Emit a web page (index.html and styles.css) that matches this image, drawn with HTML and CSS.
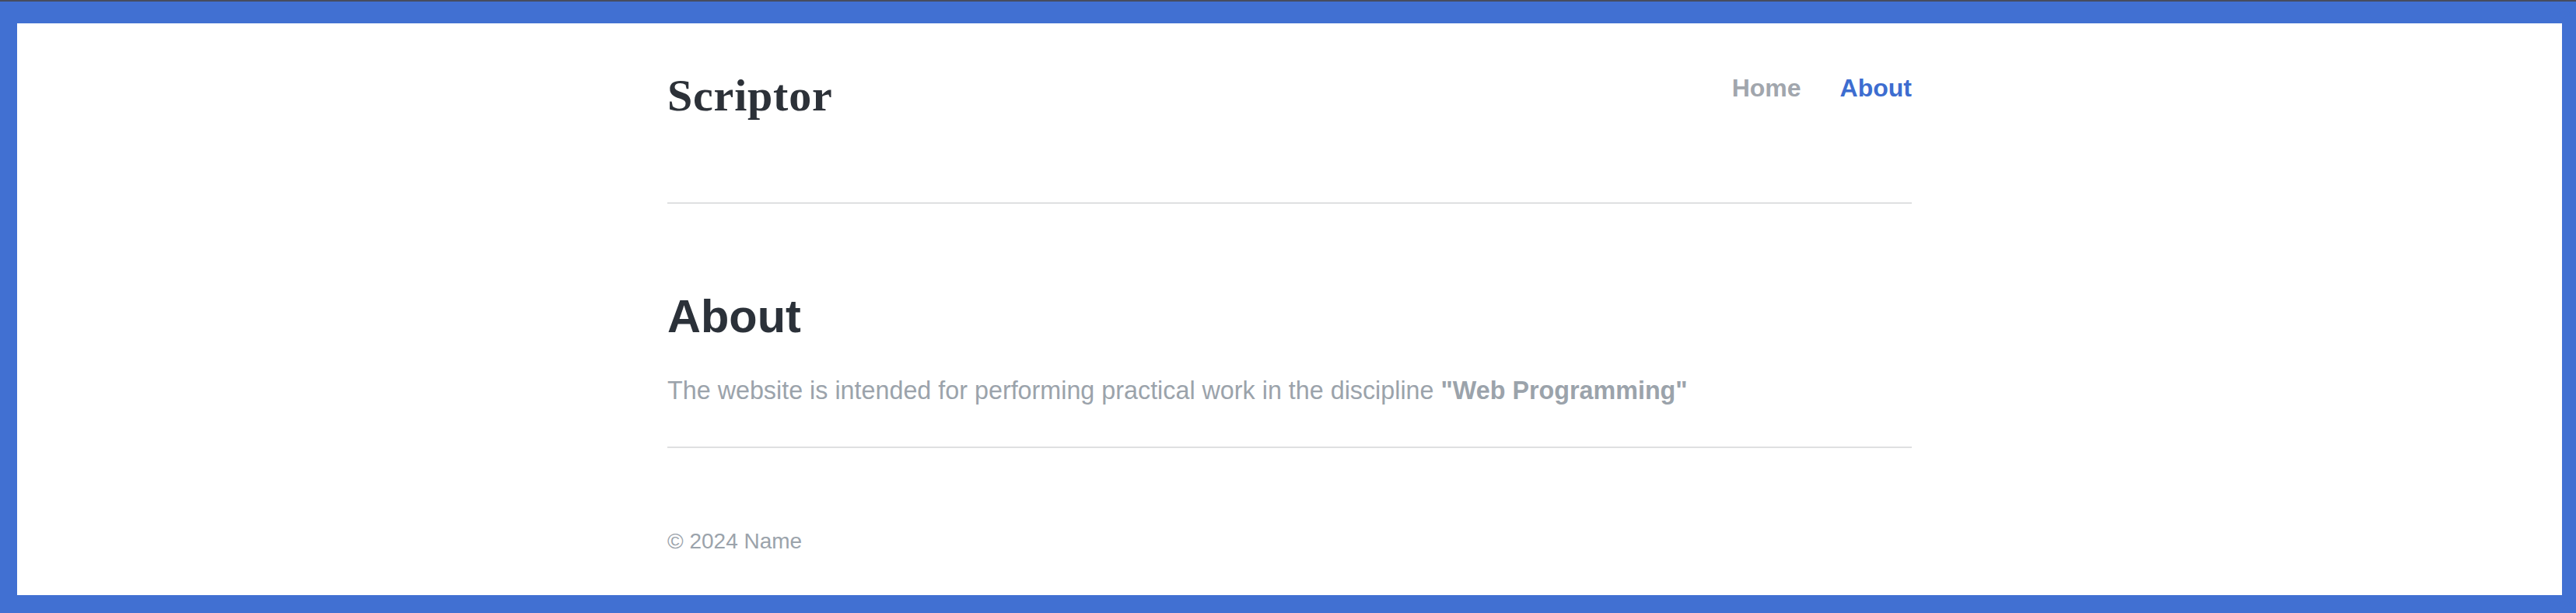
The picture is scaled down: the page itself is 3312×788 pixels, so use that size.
FILE: index.html
```html
<!DOCTYPE html>
<html lang="en">
<head>
<meta charset="utf-8">
<title>Scriptor — About</title>
<link rel="stylesheet" href="styles.css">
</head>
<body>
<div class="topstrip"></div>
<div class="frame">
  <div class="page">
    <header class="site-header">
      <a class="logo" href="#">Scriptor</a>
      <nav class="nav">
        <a class="nav-link" href="#">Home</a>
        <a class="nav-link nav-link-active" href="#">About</a>
      </nav>
    </header>
    <main class="content">
      <h1 class="title">About</h1>
      <p class="lead">The website is intended for performing practical work in the discipline <strong>"Web Programming"</strong></p>
    </main>
    <footer class="site-footer">© 2024 Name</footer>
  </div>
</div>
</body>
</html>
```

FILE: styles.css
```css
html, body {
  margin: 0;
  padding: 0;
}
body {
  background: #4170d2;
  font-family: "Liberation Sans", Arial, sans-serif;
  height: 788px;
  overflow: hidden;
}
.topstrip {
  height: 2px;
  background: #474c5e;
}
.frame {
  margin: 28px 18px 0 22px;
  height: 735px;
  background: #ffffff;
  display: flex;
  justify-content: center;
}
.page {
  width: 1600px;
}
.site-header {
  display: flex;
  justify-content: space-between;
  align-items: flex-start;
  padding-top: 64px;
  padding-bottom: 108px;
  border-bottom: 2px solid #dfe0e1;
}
.logo {
  font-family: "Liberation Serif", Georgia, serif;
  font-weight: 700;
  font-size: 58px;
  line-height: 58px;
  letter-spacing: 0.8px;
  color: #2c3138;
  text-decoration: none;
}
.nav {
  display: flex;
  gap: 50px;
  margin-top: 3px;
}
.nav-link {
  font-weight: 700;
  font-size: 32px;
  line-height: 32px;
  color: #a1a6ad;
  text-decoration: none;
}
.nav-link-active {
  color: #3d6dd0;
}
.content {
  padding-top: 115px;
  padding-bottom: 56px;
  border-bottom: 2px solid #dfe0e1;
}
.title {
  margin: 0;
  font-size: 59.5px;
  line-height: 59px;
  font-weight: 700;
  color: #2b3139;
}
.lead {
  margin: 50px 0 0 0;
  font-size: 32.3px;
  line-height: 32px;
  color: #9ba3ab;
}
.lead strong {
  font-weight: 700;
}
.site-footer {
  padding-top: 106px;
  font-size: 28px;
  line-height: 28px;
  color: #9ba3ab;
}
```
